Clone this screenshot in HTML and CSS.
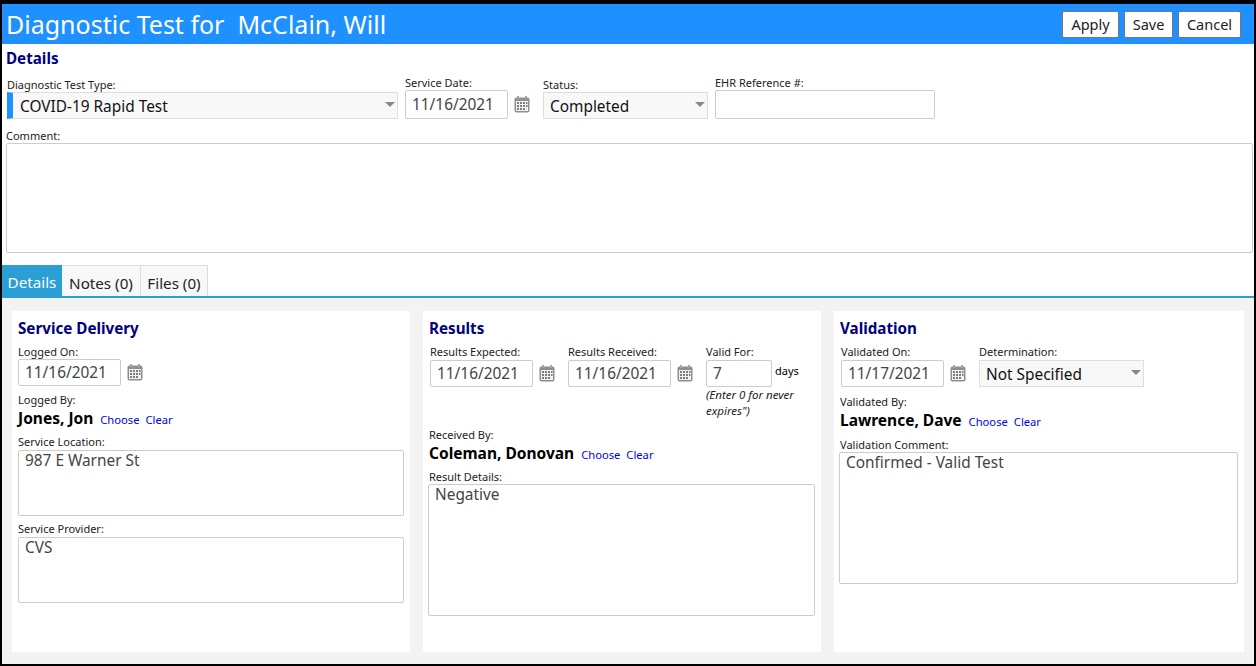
FILE: index.html
```html
<!DOCTYPE html>
<html lang="en">
<head>
    <meta charset="UTF-8">
    <title>Diagnostic Test</title>
    <link rel="stylesheet" href="styles.css">
</head>
<body>
<svg class="defs" width="0" height="0">
    <symbol id="cal" viewBox="0 0 16 17">
        <rect x="0.5" y="1.5" width="15" height="15" rx="2" fill="#8f8f8f"/>
        <rect x="2" y="5" width="12" height="10" fill="#f2f2f2"/>
        <rect x="3" y="0" width="2" height="3" fill="#a5a5a5"/>
        <rect x="11" y="0" width="2" height="3" fill="#a5a5a5"/>
        <g fill="#7d7d7d">
            <rect x="3" y="6" width="2" height="2"/><rect x="6" y="6" width="2" height="2"/><rect x="9" y="6" width="2" height="2"/><rect x="12" y="6" width="1.5" height="2"/>
            <rect x="3" y="9" width="2" height="2"/><rect x="6" y="9" width="2" height="2"/><rect x="9" y="9" width="2" height="2"/><rect x="12" y="9" width="1.5" height="2"/>
            <rect x="3" y="12" width="2" height="2"/><rect x="6" y="12" width="2" height="2"/><rect x="9" y="12" width="2" height="2"/>
        </g>
    </symbol>
</svg>
<div class="window">
    <div class="titlebar">
        <h1>Diagnostic Test for&nbsp; McClain, Will</h1>
        <div class="actions">
            <button class="btn">Apply</button>
            <button class="btn">Save</button>
            <button class="btn">Cancel</button>
        </div>
    </div>

    <div class="details">
        <h2 class="head">Details</h2>
        <div class="top-row">
            <div class="field f-type">
                <label>Diagnostic Test Type:</label>
                <div class="select required">COVID-19 Rapid Test<i class="caret"></i></div>
            </div>
            <div class="field f-date">
                <label>Service Date:</label>
                <div class="date-wrap"><input class="input date" value="11/16/2021"><svg class="cal"><use href="#cal"/></svg></div>
            </div>
            <div class="field f-status">
                <label>Status:</label>
                <div class="select">Completed<i class="caret"></i></div>
            </div>
            <div class="field f-ehr">
                <label>EHR Reference #:</label>
                <input class="input">
            </div>
        </div>
        <label class="comment-label">Comment:</label>
        <textarea class="area comment"></textarea>
    </div>

    <div class="tabs">
        <div class="tab active">Details</div>
        <div class="tab">Notes (0)</div>
        <div class="tab">Files (0)</div>
    </div>

    <div class="panels">
        <div class="card c1">
            <h2 class="head">Service Delivery</h2>
            <div class="field">
                <label>Logged On:</label>
                <div class="date-wrap"><input class="input date" value="11/16/2021"><svg class="cal"><use href="#cal"/></svg></div>
            </div>
            <label class="by">Logged By:</label>
            <div class="person"><b>Jones, Jon</b><a>Choose</a><a>Clear</a></div>
            <label class="lbl">Service Location:</label>
            <textarea class="area h66">987 E Warner St</textarea>
            <label class="lbl">Service Provider:</label>
            <textarea class="area h66">CVS</textarea>
        </div>

        <div class="card c2">
            <h2 class="head">Results</h2>
            <div class="res-row">
                <div class="field f-exp">
                    <label>Results Expected:</label>
                    <div class="date-wrap"><input class="input date" value="11/16/2021"><svg class="cal"><use href="#cal"/></svg></div>
                </div>
                <div class="field f-exp">
                    <label>Results Received:</label>
                    <div class="date-wrap"><input class="input date" value="11/16/2021"><svg class="cal"><use href="#cal"/></svg></div>
                </div>
                <div class="field f-valid">
                    <label>Valid For:</label>
                    <div class="days-wrap"><input class="input days" value="7"><span>days</span></div>
                    <em>(Enter 0 for never expires")</em>
                </div>
            </div>
            <label class="by">Received By:</label>
            <div class="person"><b>Coleman, Donovan</b><a>Choose</a><a>Clear</a></div>
            <label class="lbl">Result Details:</label>
            <textarea class="area h132">Negative</textarea>
        </div>

        <div class="card c3">
            <h2 class="head">Validation</h2>
            <div class="res-row">
                <div class="field f-exp">
                    <label>Validated On:</label>
                    <div class="date-wrap"><input class="input date" value="11/17/2021"><svg class="cal"><use href="#cal"/></svg></div>
                </div>
                <div class="field f-det">
                    <label>Determination:</label>
                    <div class="select">Not Specified<i class="caret"></i></div>
                </div>
            </div>
            <label class="by">Validated By:</label>
            <div class="person"><b>Lawrence, Dave</b><a>Choose</a><a>Clear</a></div>
            <label class="lbl">Validation Comment:</label>
            <textarea class="area h132">Confirmed - Valid Test</textarea>
        </div>
    </div>
</div>
</body>
</html>
```
FILE: styles.css
```css
html,body{margin:0;padding:0;height:100%;}
body{background:#000;font-family:"Noto Sans","Open Sans",sans-serif;overflow:hidden;}
.defs{position:absolute;}
*{box-sizing:border-box;}

.window{margin:4px 2px 0 2px;height:660px;background:#fff;display:flex;flex-direction:column;}
.titlebar{height:40px;background:#1e90ff;display:flex;justify-content:space-between;align-items:center;padding:0 13px 0 4px;flex:none;}
.titlebar h1{margin:0;color:#fff;font-size:25px;font-weight:400;line-height:40px;}
.actions{display:flex;gap:5px;}
.btn{height:27px;padding:0;background:#fff;border:1px solid #777;border-radius:2px;font:14.5px/25px "Noto Sans",sans-serif;color:#222;width:49px;}
.btn:nth-child(1){width:57px;}
.btn:nth-child(3){width:63px;}

.head{margin:0;color:#000080;font-size:15.2px;font-weight:700;line-height:20px;}
label{display:block;font-size:11px;line-height:14px;color:#222;}
.input,.area{border:1px solid #ccc;border-radius:2px;background:#fff;font-family:"Noto Sans",sans-serif;font-size:15.4px;color:#444;outline:none;}
.input{height:27px;padding:0 6px;display:block;}
.area{display:block;width:100%;padding:0 6px;resize:none;overflow:hidden;line-height:20px;}
.select{position:relative;height:27px;background:#f8f8f8;border:1px solid #ddd;font-size:15.4px;line-height:27px;padding-left:6px;color:#111;}
.select.required{border-left:6px solid #1e90ff;padding-left:7px;}
.caret{position:absolute;right:2px;top:9px;border:5px solid transparent;border-top:5px solid #888;border-bottom:0;}

.details{padding:4px 1px 0 4px;flex:none;}
.details .head{margin-bottom:8px;}
.top-row{display:flex;align-items:flex-end;}
.f-type{width:391px;margin-left:1px;margin-right:7px;}
.f-date{width:138px;}
.date-wrap{display:flex;align-items:center;}
.date{width:103px;}
.cal{width:16px;height:17px;margin-left:6px;flex:none;}
.f-status{width:165px;margin-right:7px;}
.f-ehr{width:220px;}
.f-ehr .input{width:220px;height:29px;}
.date-wrap .input{height:29px;}
.comment-label{margin-top:10px;}
.comment{height:110px;}

.tabs{display:flex;margin-top:12px;height:33px;border-bottom:2px solid #2a9fd6;flex:none;}
.tab{height:31px;width:79px;text-align:center;line-height:34px;font-size:15.2px;background:#f8f8f8;border:1px solid #ddd;border-bottom:0;border-left:0;color:#222;}
.tab:nth-child(3){width:67px;}
.tab.active{background:#2a9fd6;color:#fff;border:0;width:60px;}

.panels{flex:1;background:#f3f3f3;display:flex;gap:13px;padding:13px 10px 12px 10px;}
.card{background:#fff;padding:7px 6px 0 6px;}
.c1{width:398px;}
.c2{width:398px;}
.c3{width:410px;}
.card .head{margin-bottom:7px;}
.card .date-wrap .input{height:27px;}
.by{margin-top:7px;}
.c2 .by{margin-top:9px;}
.c3 .by{margin-top:8px;}
.person{display:flex;align-items:baseline;line-height:22px;font-size:11.2px;}
.person b{font-size:15.5px;margin-right:7px;color:#000;}
.person a{color:#00e;margin-right:6px;}
.lbl{margin-top:4px;}
.c1 .lbl{margin-bottom:1px;}
.c1 .area + .lbl{margin-top:6px;}
.c3 .lbl{margin-top:5px;}
.c2 .area,.c3 .area{margin-left:-1px;width:calc(100% + 1px);}
.h66{height:66px;}
.h132{height:132px;}
.res-row{display:flex;}
.c2 .date-wrap,.c3 .date-wrap{margin-top:1px;}
.f-exp{width:138px;margin-left:1px;}
.f-exp + .f-exp{margin-left:0;}
.f-valid{width:105px;}
.days-wrap{display:flex;gap:3px;align-items:flex-start;font-size:11px;line-height:24px;}
.days{width:66px;}
.f-valid .input{height:27px;margin-top:1px;}
.f-valid em{display:block;font-size:11.5px;line-height:16px;width:95px;color:#222;}
.f-det{width:165px;}
.f-det .select{margin-top:1px;}
```
